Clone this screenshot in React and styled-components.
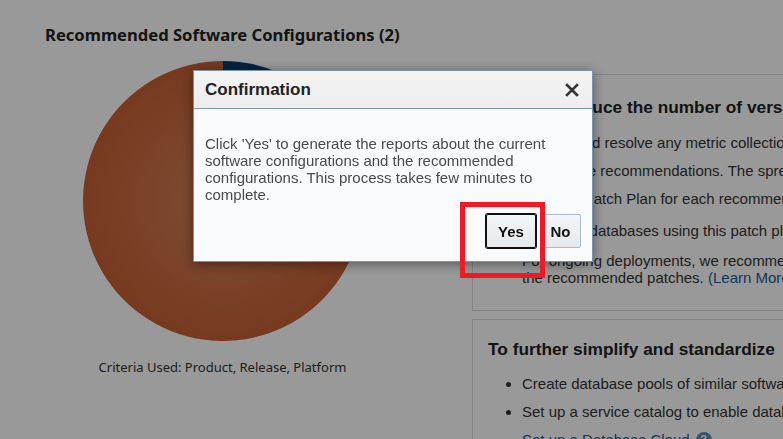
import styled, { createGlobalStyle } from "styled-components";

const Global = createGlobalStyle`
  html, body {
    margin: 0;
    padding: 0;
    background: #fff;
  }
`;

const Page = styled.div`
  position: relative;
  width: 783px;
  height: 439px;
  overflow: hidden;
  display: flex;
  font-family: "Liberation Sans", Arial, sans-serif;
  color: #333;
`;

const LeftCol = styled.div`
  width: 445px;
  flex: none;
  padding-top: 24px;
  display: flex;
  flex-direction: column;
`;

const Title = styled.h2`
  margin: 0;
  padding-left: 45px;
  font-family: "Noto Sans", sans-serif;
  font-size: 16.6px;
  font-weight: 700;
  line-height: 22px;
  color: #222;
`;

const PieWrap = styled.div`
  display: flex;
  justify-content: center;
  margin-top: 15px;
`;

const Criteria = styled.div`
  margin-top: 17px;
  text-align: center;
  font-family: "Noto Sans", sans-serif;
  font-size: 13px;
  line-height: 18px;
  color: #333;
`;

const RightCol = styled.div`
  flex: none;
  width: 700px;
  padding: 74px 0 0 27px;
  display: flex;
  flex-direction: column;
  gap: 8px;
`;

const Card = styled.section`
  border: 1px solid #dcdcdc;
  padding: ${(p) => p.$pad || "21px 15px 24px"};
`;

const CardHead = styled.h3`
  margin: 0 0 ${(p) => p.$gap || 12}px;
  font-size: 17.3px;
  font-weight: 700;
  line-height: 22px;
  color: #222;
`;

const List = styled.ul`
  margin: 0;
  padding-left: 34px;
  list-style: ${(p) => p.$type || "disc"};
  font-size: 15px;
  line-height: 17px;
`;

const Item = styled.li`
  margin-bottom: ${(p) => p.$gap || 11}px;
`;

const Note = styled.p`
  margin: 0;
  padding-left: 34px;
  font-size: 15px;
  line-height: 17px;
`;

const Link = styled.a`
  color: #145c9e;
  text-decoration: none;
`;

const LinkRow = styled.div`
  display: flex;
  align-items: center;
  gap: 6px;
  padding-left: 34px;
  font-size: 15px;
  line-height: 17px;
`;

const HelpDot = styled.span`
  width: 16px;
  height: 16px;
  border-radius: 50%;
  background: #5b8ec4;
  color: #fff;
  font-size: 11px;
  font-weight: 700;
  display: inline-flex;
  align-items: center;
  justify-content: center;
`;

const Overlay = styled.div`
  position: fixed;
  inset: 0;
  background: rgba(0, 0, 0, 0.4);
`;

const Dialog = styled.div`
  position: fixed;
  left: 193px;
  top: 70px;
  width: 398px;
  height: 190px;
  border: 1px solid #7a93ad;
  background: #f9fafb;
  box-shadow: 0 2px 12px rgba(0, 0, 0, 0.45);
  display: flex;
  flex-direction: column;
  font-family: "Liberation Sans", Arial, sans-serif;
`;

const DialogHead = styled.div`
  height: 37px;
  flex: none;
  display: flex;
  align-items: center;
  justify-content: space-between;
  padding: 0 13px 0 11px;
  background: linear-gradient(#f3f3f3, #eeeeee);
  border-bottom: 1px solid #7d98b3;
`;

const DialogTitle = styled.span`
  font-size: 17px;
  font-weight: 700;
  color: #222;
`;

const DialogBody = styled.div`
  flex: 1;
  padding: 26px 11px 13px 11px;
  display: flex;
  flex-direction: column;
`;

const Message = styled.p`
  margin: 0;
  font-size: 15px;
  line-height: 17px;
  color: #4a4a4a;
`;

const Buttons = styled.div`
  margin-top: auto;
  display: flex;
  justify-content: flex-end;
  gap: 4px;
`;

const Button = styled.button`
  width: ${(p) => (p.$focused ? 50 : 41)}px;
  height: 34px;
  padding: 0;
  border: 1px solid ${(p) => (p.$focused ? "#111" : "#a9bccf")};
  box-shadow: ${(p) => (p.$focused ? "0 0 0 1px #111" : "none")};
  border-radius: 2px;
  background: linear-gradient(#f4f6f8, #e4e9ee);
  font-family: "Liberation Sans", Arial, sans-serif;
  font-size: 15px;
  font-weight: 700;
  color: #111;
`;

const Highlight = styled.div`
  position: absolute;
  left: 460px;
  top: 202px;
  width: 75px;
  height: 66px;
  border: 5px solid #ed1c24;
`;

const CloseIcon = () => (
  <svg width="14" height="14" viewBox="0 0 14 14">
    <path d="M2 2 L12 12 M12 2 L2 12" stroke="#333" strokeWidth="2.6" strokeLinecap="square" />
  </svg>
);

const Pie = () => (
  <svg width="280" height="280" viewBox="0 0 280 280">
    <defs>
      <radialGradient id="brown" cx="50%" cy="50%" r="50%">
        <stop offset="0%" stopColor="#d3825c" />
        <stop offset="100%" stopColor="#c66135" />
      </radialGradient>
    </defs>
    <path d="M140 140 L210 18.76 A140 140 0 1 1 140 0 Z" fill="url(#brown)" />
    <path d="M140 140 L140 0 A140 140 0 0 1 210 18.76 Z" fill="#0b3b6a" />
  </svg>
);

export default function App() {
  return (
    <>
      <Global />
      <Page>
        <LeftCol>
          <Title>Recommended Software Configurations (2)</Title>
          <PieWrap>
            <Pie />
          </PieWrap>
          <Criteria>Criteria Used: Product, Release, Platform</Criteria>
        </LeftCol>
        <RightCol>
          <Card>
            <CardHead $gap={16}>To better reduce the number of versions of your software</CardHead>
            <List $type="decimal">
              <Item>Review and resolve any metric collection errors for the targets.</Item>
              <Item>Review the recommendations. The spreadsheet lists all the targets.</Item>
              <Item $gap={15}>Create a Patch Plan for each recommended configuration.</Item>
              <Item $gap={13}>Patch the databases using this patch plan.</Item>
            </List>
            <Note>
              For ongoing deployments, we recommend that you create new databases using
              <br />
              the recommended patches. <Link href="#">(Learn More)</Link>
            </Note>
          </Card>
          <Card $pad="18px 15px 0">
            <CardHead $gap={15}>To further simplify and standardize</CardHead>
            <List>
              <Item>Create database pools of similar software configurations.</Item>
              <Item>Set up a service catalog to enable database self service.</Item>
            </List>
            <LinkRow>
              <Link href="#">Set up a Database Cloud</Link>
              <HelpDot>?</HelpDot>
            </LinkRow>
          </Card>
        </RightCol>
        <Overlay />
        <Dialog>
          <DialogHead>
            <DialogTitle>Confirmation</DialogTitle>
            <CloseIcon />
          </DialogHead>
          <DialogBody>
            <Message>
              Click 'Yes' to generate the reports about the current software configurations and the
              recommended configurations. This process takes few minutes to complete.
            </Message>
            <Buttons>
              <Button $focused>Yes</Button>
              <Button>No</Button>
            </Buttons>
          </DialogBody>
        </Dialog>
        <Highlight />
      </Page>
    </>
  );
}
